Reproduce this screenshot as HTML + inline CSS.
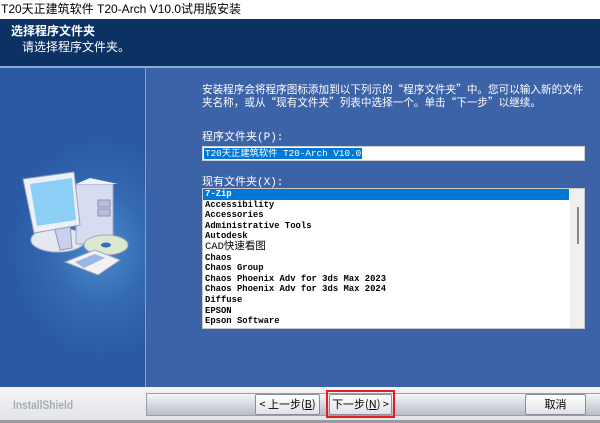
<!DOCTYPE html>
<html><head><meta charset="utf-8"><style>
*{margin:0;padding:0;box-sizing:border-box}
body{width:600px;height:423px;overflow:hidden;position:relative;background:#3c63a7;font-family:"Liberation Sans","Noto Sans CJK SC",sans-serif}
.abs{position:absolute}
.mono{font-family:"Liberation Mono","Noto Sans CJK SC",monospace}
.btn{position:absolute;top:394px;height:21px;background:linear-gradient(#ffffff,#e0e2e8);border:1px solid #8a8e98;border-radius:2px;font-size:11px;line-height:19px;text-align:center;white-space:nowrap;font-family:"Noto Sans CJK SC",sans-serif}
</style></head><body>
<div class="abs" style="left:0;top:0;width:600px;height:19px;background:#fff;font-size:12px;line-height:19px;color:#000;padding-left:1px">T20天正建筑软件 T20-Arch V10.0试用版安装</div>
<div class="abs" style="left:0;top:19px;width:600px;height:47px;background:#0b3262"></div>
<div class="abs" style="left:11px;top:22px;font-size:12px;font-weight:bold;color:#fff">选择程序文件夹</div>
<div class="abs" style="left:22px;top:38px;font-size:12px;color:#fff">请选择程序文件夹。</div>
<div class="abs" style="left:0;top:66px;width:600px;height:2px;background:#8aaad6"></div>
<div class="abs" style="left:0;top:68px;width:145px;height:319px;background:radial-gradient(ellipse 90px 110px at 100px 180px,#4a8ccb 0%,#3468b2 55%,#2a5aa4 100%)"></div>
<div class="abs" style="left:145px;top:68px;width:1px;height:319px;background:#7fa2d4"></div>
<svg class="abs" style="left:20px;top:170px" width="110" height="110" viewBox="0 0 110 110">
<ellipse cx="38" cy="70" rx="27" ry="12" fill="#e6e9f2" stroke="#b0b6c8"/>
<rect x="56" y="14" width="37" height="60" fill="#d8dcf0" stroke="#a0a8c0"/>
<polygon points="56,14 70,8 98,14 93,14" fill="#f0f2fa"/>
<rect x="78" y="30" width="12" height="7" fill="#b8c0e0" stroke="#8890b0"/>
<rect x="78" y="39" width="12" height="7" fill="#b8c0e0" stroke="#8890b0"/>
<polygon points="34,56 50,54 52,78 40,80" fill="#c8d0ec" stroke="#9098b8"/>
<polygon points="3,9 54,2 60,55 14,63" fill="#eef0f8" stroke="#9aa0b8"/>
<polygon points="10,14 52,8 56,50 17,56" fill="#8ccff6"/>
<ellipse cx="86" cy="75" rx="22" ry="10" fill="#dde8d0" stroke="#9fa8b8"/>
<ellipse cx="86" cy="75" rx="5" ry="2.5" fill="#3670b8"/>
<polygon points="45,92 75,80 100,90 78,105" fill="#f2f2f6" stroke="#a0a8b8"/>
<polygon points="55,92 75,84 85,88 64,98" fill="#9cb6e8"/>
</svg>
<div class="abs" style="left:202px;top:83px;width:385px;font-family:'Noto Sans CJK SC',sans-serif;font-size:10.6px;line-height:13px;color:#fff">安装程序会将程序图标添加到以下列示的“程序文件夹”中。您可以输入新的文件夹名称，或从“现有文件夹”列表中选择一个。单击“下一步”以继续。</div>
<div class="abs mono" style="left:202px;top:128px;font-size:11px;color:#fff">程序文件夹(P):</div>
<div class="abs" style="left:202px;top:146px;width:383px;height:15px;background:#fff;border:1px solid #d0d0d0"></div>
<div class="abs mono" style="left:204px;top:148px;height:11px;background:#0078d7;color:#fff;font-size:9.3px;line-height:11px;padding:0 1px;white-space:nowrap">T20天正建筑软件 T20-Arch V10.0</div>
<div class="abs mono" style="left:202px;top:173px;font-size:11px;color:#fff">现有文件夹(X):</div>
<div class="abs" style="left:202px;top:188px;width:383px;height:141px;background:#fff;border:1px solid #c8c8c8;overflow:hidden">
<div class="abs" style="left:0;top:0;width:366px;height:11px;background:#0078d7"></div>
<div class="abs" style="left:367px;top:0;width:15px;height:139px;background:#f0f0f0"></div>
<div class="abs" style="left:374px;top:18px;width:2px;height:37px;background:#888"></div>
<div class="mono" style="position:absolute;left:2px;top:0;font-size:8.9px;line-height:10.6px;color:#000;font-weight:bold;white-space:nowrap">
<div style="color:#fff">7-Zip</div><div>Accessibility</div><div>Accessories</div><div>Administrative Tools</div><div>Autodesk</div><div style="font-weight:normal;font-size:10.5px">CAD快速看图</div><div>Chaos</div><div>Chaos Group</div><div>Chaos Phoenix Adv for 3ds Max 2023</div><div>Chaos Phoenix Adv for 3ds Max 2024</div><div>Diffuse</div><div>EPSON</div><div>Epson Software</div></div>
</div>
<div class="abs" style="left:0;top:387px;width:600px;height:36px;background:linear-gradient(#f4f4f6,#e2e3e8)"></div>
<div class="abs" style="left:0;top:420px;width:600px;height:3px;background:#9a9aa0"></div>
<div class="abs" style="left:13px;top:398px;font-size:12px;color:#a8acb4;font-weight:bold;transform:scaleX(0.85);transform-origin:left">InstallShield</div>
<div class="abs" style="left:146px;top:393px;width:454px;height:23px;background:linear-gradient(#f6f6f8,#b8bcc8);border:1px solid #9a9ea8;border-right:none"></div>
<div class="btn" style="left:255px;width:65px">&lt; 上一步(<u>B</u>)</div>
<div class="abs" style="left:326px;top:390px;width:69px;height:28px;border:2px solid #e02020"></div>
<div class="btn" style="left:329px;width:63px">下一步(<u>N</u>) &gt;</div>
<div class="btn" style="left:525px;width:61px">取消</div>
</body></html>
